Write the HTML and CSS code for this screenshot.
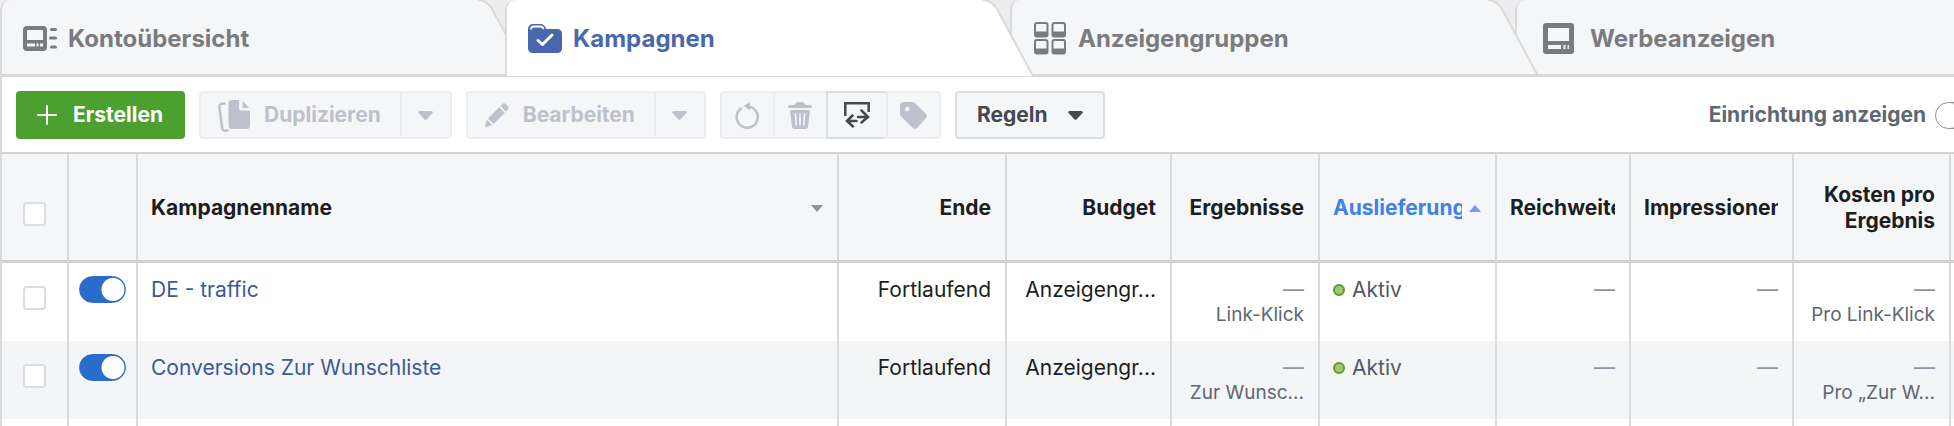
FILE: index.html
```html
<!DOCTYPE html>
<html lang="de">
<head>
<meta charset="utf-8">
<title>Werbeanzeigenmanager - Kampagnen</title>
<link rel="stylesheet" href="styles.css">
</head>
<body>

<div class="manager">

<nav class="tabs">
  <div class="tab">
    <a href="#account">
      <svg class="tab-icon" width="34" height="25" viewBox="0 0 34 25">
        <path fill="currentColor" fill-rule="evenodd" d="M4 0H20a4 4 0 0 1 4 4V21a4 4 0 0 1-4 4H4a4 4 0 0 1-4-4V4a4 4 0 0 1 4-4zM4.500 4Q4 4 4 4.500V14H20V4.500Q20 4 19.500 4zM4 17.500V20.500H12V17.500zM13.500 17.500V20.500H15.500V17.500zM17 17.500V20.500H20V17.500z"/>
        <path stroke="currentColor" stroke-width="3" stroke-linecap="round" d="M28.500 3.500H32.500M27.500 12H32.500M28.500 21H32.500"/>
      </svg>
      Kontoübersicht
    </a>
    <svg class="slant" width="52" height="77" viewBox="0 0 52 77">
      <path class="slant-fill" d="M0 0H2C9 0 13 4 16 9L51 74H0z"/>
      <path class="slant-line" d="M2 0C9 0 13 4 16 9L51 74"/>
      <path class="slant-base" d="M0 74H52V77H0z"/>
    </svg>
  </div>
  <div class="tab tab-active">
    <a href="#campaigns" aria-current="page">
      <svg class="tab-icon" width="34" height="31" viewBox="0 0 34 31">
        <path fill="currentColor" d="M5 1H13C15 1 17 3 18.500 6H29.500A4.500 4.500 0 0 1 34 10.500V25.500A4.500 4.500 0 0 1 29.500 30H4.500A4.500 4.500 0 0 1 0 25.500V6A5 5 0 0 1 5 1z"/>
        <path fill="none" stroke="#fff" stroke-width="2" d="M3 6.500C3 4.500 4 3.500 6 3.500H12.500C14 3.500 15 4.500 15.500 6"/>
        <path fill="none" stroke="#fff" stroke-width="3" stroke-linecap="round" stroke-linejoin="round" d="M10 17.500L14.500 21.500L24 12"/>
      </svg>
      Kampagnen
    </a>
    <svg class="slant" width="52" height="77" viewBox="0 0 52 77">
      <path class="slant-fill" d="M0 0H2C9 0 13 4 16 9L52 76H0z"/>
      <path class="slant-line" d="M2 0C9 0 13 4 16 9L52 76"/>
      <path class="slant-base" d="M0 76H52V77H0z"/>
    </svg>
  </div>
  <div class="tab tab-front">
    <a href="#adsets">
      <svg class="tab-icon" width="34" height="33" viewBox="0 0 34 33">
        <g fill="currentColor" fill-rule="evenodd">
          <path id="group" d="M4 0H12.500a3 3 0 0 1 3 3V12.500a3 3 0 0 1-3 3H4a3 3 0 0 1-3-3V3a3 3 0 0 1 3-3zM4 2A1 1 0 0 0 3 3V9.500H13.500V3A1 1 0 0 0 12.500 2z"/>
          <use href="#group" x="17.500"/>
          <use href="#group" y="17"/>
          <use href="#group" x="17.500" y="17"/>
        </g>
      </svg>
      Anzeigengruppen
    </a>
    <svg class="slant" width="52" height="77" viewBox="0 0 52 77">
      <path class="slant-fill" d="M0 0H2C9 0 13 4 16 9L51 74H0z"/>
      <path class="slant-line" d="M2 0C9 0 13 4 16 9L51 74"/>
      <path class="slant-base" d="M0 74H52V77H0z"/>
    </svg>
  </div>
  <div class="tab">
    <a href="#ads">
      <svg class="tab-icon" width="41" height="31" viewBox="0 0 41 31">
        <path fill="currentColor" fill-rule="evenodd" d="M8 0H33a3 3 0 0 1 3 3V28a3 3 0 0 1-3 3H8a3 3 0 0 1-3-3V3a3 3 0 0 1 3-3zM10 5V18H31V5zM10 22V26H23V22zM25.500 22V26H27.500V22zM29.500 22V26H31V22z"/>
      </svg>
      Werbeanzeigen
    </a>
  </div>
</nav>

<div class="toolbar">
  <button class="btn btn-create">
    <svg width="20" height="20" viewBox="0 0 20 20"><path stroke="currentColor" stroke-width="2" stroke-linecap="round" d="M10 1V19M1 10H19"/></svg>
    Erstellen
  </button>

  <div class="btn-group">
    <button class="btn" disabled>
      <svg width="32" height="33" viewBox="0 0 32 33">
        <path fill="currentColor" d="M14 1H21V9a2.500 2.500 0 0 0 2.500 2.500H32V26.500A3.500 3.500 0 0 1 28.500 30H14A3.500 3.500 0 0 1 10.500 26.500V4.500A3.500 3.500 0 0 1 14 1zM24.500 2L31.500 9H24.500z"/>
        <path fill="none" stroke="currentColor" stroke-width="2.500" stroke-linecap="round" d="M6.500 4.500C2.500 4.500 1 5.500 1.400 8.500L4 28C4.500 31.500 6 32 9.500 31.500"/>
      </svg>
      Duplizieren
    </button>
    <button class="btn btn-caret" disabled aria-label="Duplizieren, Optionen">
      <svg width="15" height="9" viewBox="0 0 15 9"><path fill="currentColor" d="M1.500 0H13.500Q15.500 .5 14.500 2L8.700 8.300Q7.500 9.300 6.300 8.300L.5 2Q-.5 .5 1.500 0z"/></svg>
    </button>
  </div>

  <div class="btn-group">
    <button class="btn" disabled>
      <svg width="24" height="24" viewBox="0 0 24 24">
        <path fill="currentColor" d="M17.500 1Q19 -.5 20.500 1L23 3.500Q24.500 5 23 6.500L21 8.500L15.500 3zM14.300 4.200L19.800 9.700L8.500 21L3 15.500zM2 16.700L7.300 22L1.500 24Q0 24 0 22.500z"/>
      </svg>
      Bearbeiten
    </button>
    <button class="btn btn-caret" disabled aria-label="Bearbeiten, Optionen">
      <svg width="15" height="9" viewBox="0 0 15 9"><path fill="currentColor" d="M1.500 0H13.500Q15.500 .5 14.500 2L8.700 8.300Q7.500 9.300 6.300 8.300L.5 2Q-.5 .5 1.500 0z"/></svg>
    </button>
  </div>

  <div class="btn-group icon-group">
    <button class="btn" disabled aria-label="Rückgängig">
      <svg width="24" height="28" viewBox="0 0 24 28">
        <path fill="none" stroke="currentColor" stroke-width="2.500" stroke-linecap="round" d="M6 7.500A10.600 10.600 0 1 0 12.500 5.500"/>
        <path fill="currentColor" stroke="currentColor" stroke-linejoin="round" d="M14.500 1.500V8.500L9.500 5z"/>
      </svg>
    </button>
    <button class="btn" disabled aria-label="Löschen">
      <svg width="24" height="28" viewBox="0 0 24 28">
        <path fill="currentColor" fill-rule="evenodd" d="M1.500 4H6Q8 1 10 1H14Q16 1 18 4H22.500Q24 4 24 5.500Q24 7 22.500 7H1.500Q0 7 0 5.500Q0 4 1.500 4zM2 9H22L20 25.500Q19.700 28 17.500 28H6.500Q4.300 28 4 25.500zM6.500 12.500L7.500 24.500H9L8.300 12.500zM11.200 12.500V24.500H12.800V12.500zM15.700 12.500L15 24.500H16.500L17.500 12.500z"/>
      </svg>
    </button>
    <button class="btn btn-enabled" aria-label="A/B-Test">
      <svg width="26" height="26" viewBox="0 0 26 26">
        <g fill="none" stroke="currentColor" stroke-width="2.500">
          <path d="M1.300 14V1.300H24.700V10"/>
          <path stroke-linecap="round" d="M3 19H12.500M8.500 13.500L3 19L9 24.500M14 15H23.500M17.500 8.500L24 15L17.500 20.500"/>
        </g>
      </svg>
    </button>
    <button class="btn" disabled aria-label="Markieren">
      <svg width="27" height="28" viewBox="0 0 27 28">
        <path fill="currentColor" fill-rule="evenodd" d="M4 1H12.500Q14 1 15.500 2.500L26 13Q28 15 26 17L17.500 26.500Q15 29 12.500 26.500L1.500 16Q0 14.500 0 13V5Q0 1 4 1zM7.300 5.800A2.200 2.200 0 1 0 7.300 10.200A2.200 2.200 0 1 0 7.300 5.800z"/>
      </svg>
    </button>
  </div>

  <button class="btn btn-enabled btn-rules">
    Regeln
    <svg width="15" height="9" viewBox="0 0 15 9"><path fill="currentColor" d="M1.500 0H13.500Q15.500 .5 14.500 2L8.700 8.300Q7.500 9.300 6.300 8.300L.5 2Q-.5 .5 1.500 0z"/></svg>
  </button>

  <label class="setup">
    Einrichtung anzeigen
    <input type="checkbox" class="switch" role="switch">
  </label>
</div>

<table class="campaigns">
  <colgroup>
    <col class="col-check">
    <col class="col-switch">
    <col>
    <col class="col-end">
    <col class="col-budget">
    <col class="col-results">
    <col class="col-delivery">
    <col class="col-reach">
    <col class="col-impressions">
    <col class="col-cost">
    <col class="col-rest">
  </colgroup>
  <thead>
    <tr>
      <th class="check"><input type="checkbox" aria-label="Alle auswählen"></th>
      <th></th>
      <th class="left">
        <div class="sort">
          <span>Kampagnenname</span>
          <svg width="12" height="7" viewBox="0 0 12 7"><path fill="#90949c" d="M0 0H12L6 7z"/></svg>
        </div>
      </th>
      <th>Ende</th>
      <th>Budget</th>
      <th>Ergebnisse</th>
      <th class="left sorted">
        <div class="sort">
          <span>Auslieferung</span>
          <svg width="12" height="7" viewBox="0 0 12 7"><path fill="#6f9cf3" d="M0 7H12L6 0z"/></svg>
        </div>
      </th>
      <th class="left"><div class="clip">Reichweite</div></th>
      <th class="left"><div class="clip">Impressionen</div></th>
      <th>Kosten pro Ergebnis</th>
      <th></th>
    </tr>
  </thead>
  <tbody>
    <tr>
      <td class="check"><input type="checkbox" aria-label="DE - traffic auswählen"></td>
      <td class="toggle"><input type="checkbox" class="switch" role="switch" aria-label="DE - traffic aktiv" checked></td>
      <td class="left"><a href="#traffic">DE - traffic</a></td>
      <td>Fortlaufend</td>
      <td>Anzeigengr...</td>
      <td><div class="none">—</div><div class="note">Link-Klick</div></td>
      <td class="left"><div class="status">Aktiv</div></td>
      <td><div class="none">—</div></td>
      <td><div class="none">—</div></td>
      <td><div class="none">—</div><div class="note">Pro Link-Klick</div></td>
      <td></td>
    </tr>
    <tr>
      <td class="check"><input type="checkbox" aria-label="Conversions Zur Wunschliste auswählen"></td>
      <td class="toggle"><input type="checkbox" class="switch" role="switch" aria-label="Conversions Zur Wunschliste aktiv" checked></td>
      <td class="left"><a href="#wishlist">Conversions Zur Wunschliste</a></td>
      <td>Fortlaufend</td>
      <td>Anzeigengr...</td>
      <td><div class="none">—</div><div class="note">Zur Wunsc...</div></td>
      <td class="left"><div class="status">Aktiv</div></td>
      <td><div class="none">—</div></td>
      <td><div class="none">—</div></td>
      <td><div class="none">—</div><div class="note">Pro „Zur W...</div></td>
      <td></td>
    </tr>
    <tr class="next">
      <td></td><td></td><td></td><td></td><td></td><td></td><td></td><td></td><td></td><td></td><td></td>
    </tr>
  </tbody>
</table>

</div>

</body>
</html>
```
FILE: styles.css
```css
* {
  box-sizing: border-box;
}

body {
  margin: 0;
  background: #fff;
  color: #1c1e21;
  font-family: Inter, "Liberation Sans", sans-serif;
  font-size: 21px;
  line-height: 26px;
  overflow-x: hidden;
}

a {
  color: #3b5998;
  text-decoration: none;
}

input {
  appearance: none;
  display: block;
  margin: 0;
}

.manager {
  min-height: 100vh;
  border-left: 2px solid #d9dadc;
}

/* Tabs */

.tabs {
  display: grid;
  grid-template-columns: repeat(4, 1fr);
  margin-left: -2px;
  margin-right: -66px;
  background: #ededef;
}

.tab {
  position: relative;
  color: #797b7e;
  --fill: #f5f6f8;
}

.tab-front {
  z-index: 1;
}

.tab-active {
  z-index: 2;
  color: #4967ad;
  --fill: #fff;
}

.tab a {
  display: flex;
  align-items: center;
  gap: 11px;
  height: 77px;
  margin-right: 29px;
  padding: 3px 0 0 21px;
  border-left: 2px solid #d9dadc;
  border-bottom: 3px solid #dadada;
  border-top-left-radius: 10px;
  background: var(--fill);
  color: inherit;
  font-size: 24px;
  font-weight: 700;
}

.tab-active a {
  padding-bottom: 2px;
  border-bottom-width: 1px;
}

.slant {
  position: absolute;
  top: 0;
  right: -23px;
}

.slant-fill {
  fill: var(--fill);
}

.slant-line {
  fill: none;
  stroke: #dadada;
  stroke-width: 2;
}

.slant-base {
  fill: #dadada;
}

/* Toolbar */

.toolbar {
  display: flex;
  align-items: center;
  gap: 14px;
  height: 75px;
  padding: 1px 0 0 14px;
}

.btn {
  display: flex;
  align-items: center;
  justify-content: center;
  gap: 14px;
  height: 48px;
  padding: 0 19px 0 17px;
  border: 2px solid #ebedf0;
  border-radius: 4px;
  background: #f5f6f8;
  color: #bec1c9;
  font: inherit;
  font-weight: 700;
}

.btn-create {
  gap: 16px;
  padding: 0 20px 0 19px;
  border-color: #4ba02f;
  background: #4ba02f;
  color: #fff;
}

.btn-enabled {
  border-color: #dadde1;
  color: #444950;
}

.btn-rules {
  gap: 20px;
  padding: 0 20px;
}

.btn-group {
  display: flex;
}

.btn-group .btn + .btn {
  margin-left: -2px;
  border-top-left-radius: 0;
  border-bottom-left-radius: 0;
}

.btn-group .btn:not(:last-child) {
  border-top-right-radius: 0;
  border-bottom-right-radius: 0;
}

.btn-group .btn-caret {
  width: 52px;
  padding: 0;
}

.icon-group .btn {
  width: 55px;
  padding: 0;
}

.icon-group .btn-enabled {
  width: 62px;
}

.setup {
  display: flex;
  align-items: center;
  gap: 9px;
  margin-left: auto;
  margin-right: -28px;
  color: #606770;
  font-weight: 700;
}

.switch {
  flex: none;
  width: 47px;
  height: 27px;
  border: 1px solid #8d9096;
  border-radius: 14px;
  background: radial-gradient(circle at 12px 50%, #fff 12px, #ccd0d5 13px);
}

.switch:checked {
  border-color: #2a6ccc;
  background: radial-gradient(circle at 33px 50%, #fff 11px, #2a6ccc 12px);
}

/* Campaign table */

.campaigns {
  width: 100%;
  table-layout: fixed;
  border-collapse: separate;
  border-spacing: 0;
}

.col-check { width: 67px; }
.col-switch { width: 69px; }
.col-end { width: 168px; }
.col-budget { width: 165px; }
.col-results { width: 148px; }
.col-delivery { width: 177px; }
.col-reach { width: 134px; }
.col-impressions { width: 163px; }
.col-cost { width: 157px; }
.col-rest { width: 3px; }

.campaigns th,
.campaigns td {
  padding: 0 14px;
  border-right: 2px solid #d9dadc;
  text-align: right;
}

.campaigns th:last-child,
.campaigns td:last-child {
  padding: 0;
  border-right: 0;
}

.campaigns th {
  height: 111px;
  padding-top: 2px;
  border-top: 2px solid #d0d1d3;
  border-bottom: 3px solid #d0d1d3;
  background: #f5f6f8;
  font-weight: 700;
}

.campaigns td {
  height: 78px;
  padding-top: 14px;
  vertical-align: top;
}

.campaigns tr:nth-child(even) td {
  background: #f4f5f7;
}

.campaigns .next td {
  height: 7px;
  padding: 0;
}

.campaigns .left {
  padding-left: 13px;
  text-align: left;
}

.campaigns .check {
  padding: 23px 21px 0;
}

.campaigns th.check {
  padding-top: 14px;
}

.campaigns .toggle {
  padding: 13px 10px 0;
}

.check input {
  width: 23px;
  height: 24px;
  border: 2px solid #dadde1;
  border-radius: 4px;
  background: #fff;
}

.check input:checked {
  background: #2a6ccc;
}

.sort {
  display: flex;
  align-items: center;
  justify-content: space-between;
  gap: 7px;
}

.sort span,
.clip {
  overflow: hidden;
  white-space: nowrap;
}

.sort svg {
  flex: none;
}

.sorted {
  color: #4080e8;
}

.none {
  color: #90949c;
}

.note {
  color: #606770;
  font-size: 19px;
  line-height: 24px;
  white-space: nowrap;
}

.status {
  display: flex;
  align-items: center;
  gap: 7px;
  color: #55585d;
}

.status::before {
  content: "";
  width: 8px;
  height: 8px;
  border: 2px solid #5c9a32;
  border-radius: 50%;
  background: #a3c86d;
}
```
